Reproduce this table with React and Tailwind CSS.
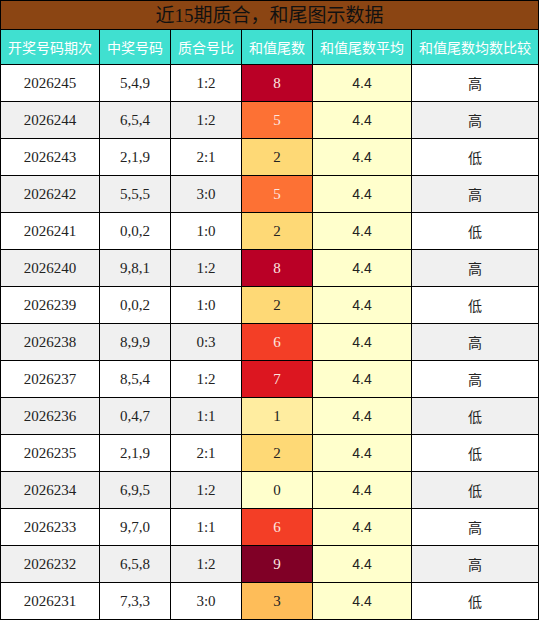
import React from "react";

const rows = [
  ["2026245", "5,4,9", "1:2", 8, "高"],
  ["2026244", "6,5,4", "1:2", 5, "高"],
  ["2026243", "2,1,9", "2:1", 2, "低"],
  ["2026242", "5,5,5", "3:0", 5, "高"],
  ["2026241", "0,0,2", "1:0", 2, "低"],
  ["2026240", "9,8,1", "1:2", 8, "高"],
  ["2026239", "0,0,2", "1:0", 2, "低"],
  ["2026238", "8,9,9", "0:3", 6, "高"],
  ["2026237", "8,5,4", "1:2", 7, "高"],
  ["2026236", "0,4,7", "1:1", 1, "低"],
  ["2026235", "2,1,9", "2:1", 2, "低"],
  ["2026234", "6,9,5", "1:2", 0, "低"],
  ["2026233", "9,7,0", "1:1", 6, "高"],
  ["2026232", "6,5,8", "1:2", 9, "高"],
  ["2026231", "7,3,3", "3:0", 3, "低"],
];

// heat colours for the tail value
const heat = {
  0: "bg-[#ffffcc] text-[#222]",
  1: "bg-[#ffeda0] text-[#222]",
  2: "bg-[#fed976] text-[#222]",
  3: "bg-[#febd59] text-[#222]",
  4: "bg-[#fd9a43] text-[#222]",
  5: "bg-[#fd7134] text-[#fde8e0]",
  6: "bg-[#f33e26] text-[#fde8e0]",
  7: "bg-[#dc1620] text-[#fde8e0]",
  8: "bg-[#ba0026] text-[#fde8e0]",
  9: "bg-[#800026] text-[#fde8e0]",
};

const headers = ["开奖号码期次", "中奖号码", "质合号比", "和值尾数", "和值尾数平均", "和值尾数均数比较"];

const serif = "font-['Liberation_Serif','Noto_Sans_CJK_SC',serif]";
const sans = "font-['Noto_Sans_CJK_SC','Liberation_Sans',sans-serif]";

export default function App() {
  return (
    <div className="w-[539px] bg-white">
      <table className="w-[539px] table-fixed border-collapse text-center">
        <colgroup>
          <col className="w-[99px]" />
          <col className="w-[71px]" />
          <col className="w-[71px]" />
          <col className="w-[71px]" />
          <col className="w-[99px]" />
          <col className="w-[127px]" />
        </colgroup>
        <thead>
          <tr className="h-[29px]">
            <th
              colSpan={6}
              className={`border border-black bg-[#8b4513] p-0 text-[19px] font-normal leading-none text-[#111] ${serif}`}
            >
              近15期质合，和尾图示数据
            </th>
          </tr>
          <tr className="h-[35px]">
            {headers.map((h) => (
              <th
                key={h}
                className={`border border-black bg-[#40e0d0] p-0 text-[14px] font-normal text-white ${sans}`}
              >
                {h}
              </th>
            ))}
          </tr>
        </thead>
        <tbody className={`text-[15px] text-[#222] ${serif}`}>
          {rows.map((r, i) => {
            const zebra = i % 2 === 1 ? "bg-[#f0f0f0]" : "bg-white";
            return (
              <tr key={r[0]} className="h-[37px]">
                <td className={`border border-black p-0 ${zebra}`}>{r[0]}</td>
                <td className={`border border-black p-0 ${zebra}`}>{r[1]}</td>
                <td className={`border border-black p-0 ${zebra}`}>{r[2]}</td>
                <td className={`border border-black p-0 ${heat[r[3]]}`}>{r[3]}</td>
                <td className="border border-black bg-[#ffffcc] p-0 text-[14px] font-['Liberation_Sans',sans-serif]">4.4</td>
                <td className={`border border-black p-0 text-[14px] ${zebra} ${sans}`}>{r[4]}</td>
              </tr>
            );
          })}
        </tbody>
      </table>
    </div>
  );
}
